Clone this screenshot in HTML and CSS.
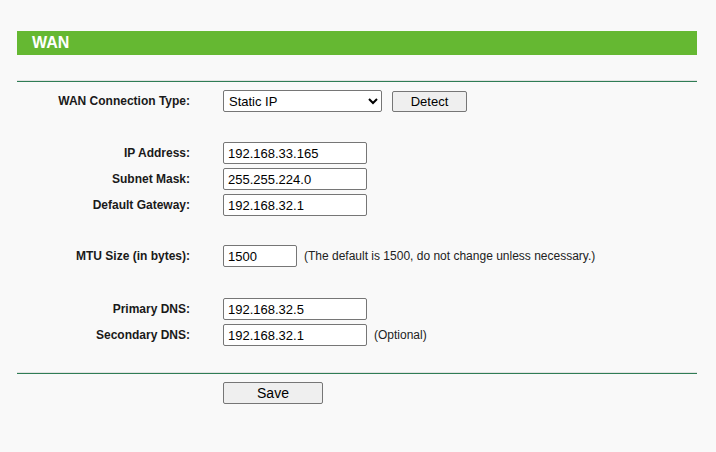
FILE: index.html
```html
<!DOCTYPE html>
<html>
<head>
<meta charset="utf-8">
<link rel="stylesheet" href="styles.css">
</head>
<body>
<div class="page">
  <div class="title-bar">WAN</div>
  <div class="rule"></div>
  <form class="form">
    <div class="group group-type">
      <div class="row">
        <label class="lbl">WAN Connection Type:</label>
        <div class="ctl">
          <select class="sel"><option>Static IP</option></select>
          <button type="button" class="btn btn-detect">Detect</button>
        </div>
      </div>
    </div>
    <div class="group group-ip">
      <div class="row">
        <label class="lbl">IP Address:</label>
        <div class="ctl"><input class="txt" value="192.168.33.165"></div>
      </div>
      <div class="row">
        <label class="lbl">Subnet Mask:</label>
        <div class="ctl"><input class="txt" value="255.255.224.0"></div>
      </div>
      <div class="row">
        <label class="lbl">Default Gateway:</label>
        <div class="ctl"><input class="txt" value="192.168.32.1"></div>
      </div>
    </div>
    <div class="group group-mtu">
      <div class="row">
        <label class="lbl">MTU Size (in bytes):</label>
        <div class="ctl"><input class="txt txt-short" value="1500"><span class="hint">(The default is 1500, do not change unless necessary.)</span></div>
      </div>
    </div>
    <div class="group group-dns">
      <div class="row">
        <label class="lbl">Primary DNS:</label>
        <div class="ctl"><input class="txt" value="192.168.32.5"></div>
      </div>
      <div class="row">
        <label class="lbl">Secondary DNS:</label>
        <div class="ctl"><input class="txt" value="192.168.32.1"><span class="hint">(Optional)</span></div>
      </div>
    </div>
    <div class="rule rule-bottom"></div>
    <div class="row row-save">
      <span class="lbl"></span>
      <div class="ctl"><button type="button" class="btn btn-save">Save</button></div>
    </div>
  </form>
</div>
</body>
</html>
```
FILE: styles.css
```css
html, body {
  margin: 0;
  padding: 0;
  background: #f9f9f9;
}
body {
  font-family: "Liberation Sans", Arial, sans-serif;
  color: #1a1a1a;
}
.page {
  width: 680px;
  margin-left: 17px;
  padding-top: 31px;
}
.title-bar {
  height: 24px;
  background: #65b832;
  color: #ffffff;
  font-weight: bold;
  font-size: 16px;
  line-height: 24px;
  padding-left: 15px;
}
.rule {
  margin-top: 25px;
  height: 1px;
  border-top: 1px solid #e2e2e2;
  background: #2f7d55;
}
.form {
  display: flex;
  flex-direction: column;
  margin: 0;
}
.group {
  display: flex;
  flex-direction: column;
  gap: 4px;
}
.group-type { margin-top: 8px; }
.group-ip { margin-top: 30px; }
.group-mtu { margin-top: 29px; }
.group-dns { margin-top: 31px; }
.row {
  display: grid;
  grid-template-columns: 173px 1fr;
  column-gap: 33px;
  align-items: center;
  height: 22px;
}
.lbl {
  text-align: right;
  font-weight: bold;
  font-size: 12px;
  color: #1a1a1a;
}
.ctl {
  display: flex;
  align-items: center;
}
.txt {
  box-sizing: border-box;
  width: 144px;
  height: 22px;
  margin: 0;
  padding: 1px 4px 0;
  border: 1px solid #767676;
  border-radius: 2px;
  background: #ffffff;
  font-family: "Liberation Sans", Arial, sans-serif;
  font-size: 13px;
  color: #000;
}
.txt-short { width: 74px; }
.hint {
  margin-left: 7px;
  font-size: 12px;
  color: #222;
}
.sel {
  box-sizing: border-box;
  width: 159px;
  height: 22px;
  margin: 0;
  border: 1px solid #767676;
  border-radius: 2px;
  background: #ffffff;
  font-family: "Liberation Sans", Arial, sans-serif;
  font-size: 13px;
  color: #000;
  padding-left: 1px;
}
.btn {
  box-sizing: border-box;
  height: 21px;
  margin: 0;
  border: 1px solid #767676;
  border-radius: 2px;
  background: #efefef;
  font-family: "Liberation Sans", Arial, sans-serif;
  font-size: 13px;
  color: #000;
  padding: 0;
}
.btn-detect {
  width: 75px;
  margin-left: 10px;
}
.rule-bottom {
  margin-top: 26px;
}
.row-save {
  margin-top: 8px;
}
.btn-save {
  width: 100px;
  height: 22px;
  font-size: 14px;
}
```
